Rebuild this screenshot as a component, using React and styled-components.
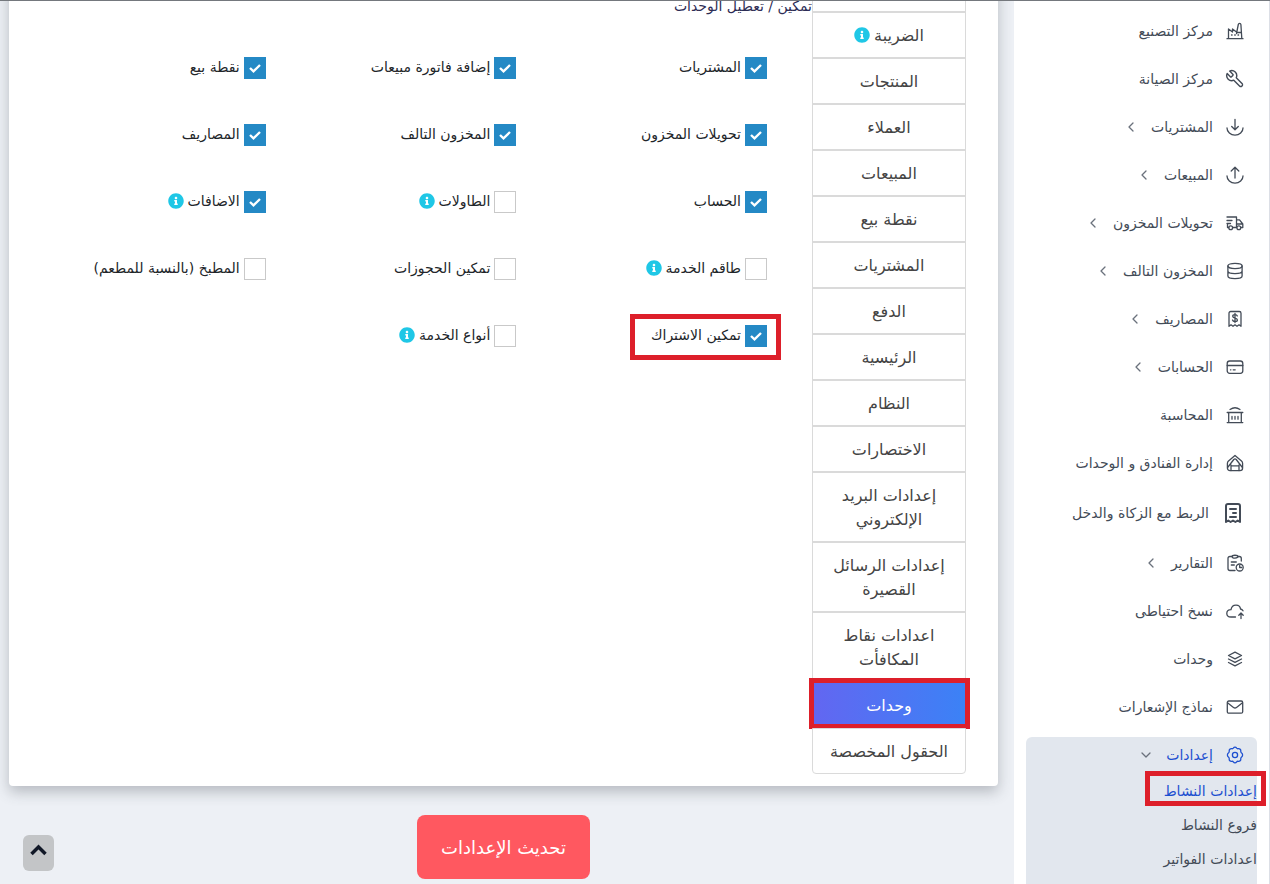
import React, { useState } from 'react';
import styled, { createGlobalStyle, css } from 'styled-components';
import { FaInfoCircle } from 'react-icons/fa';

const GlobalStyle = createGlobalStyle`
  * {
    box-sizing: border-box;
  }

  body {
    margin: 0;
    background-color: #edf0f5;
    font-family: 'DejaVu Sans', sans-serif;
    font-size: 14px;
  }
`;

const Page = styled.div`
  display: flex;
  height: 100vh;
  overflow: hidden;
  border-top: 1px solid #74787d;
`;

const Sidebar = styled.nav`
  flex: 0 0 256px;
  padding: 0 12px;
  background-color: white;
  border-right: 1px solid #dcdfe6;
`;

const MenuList = styled.ul`
  display: flex;
  flex-direction: column;
  gap: 12px;
  margin: 0;
  padding: 12px 0 0;
  list-style: none;
`;

const MenuItem = styled.li`
  border-radius: 6px;
  background-color: ${(props) => (props.$active ? '#e2e7ee' : 'transparent')};
  height: ${(props) => (props.$active ? '200px' : 'auto')};
`;

const MenuLink = styled.a`
  display: flex;
  align-items: center;
  gap: 12px;
  height: ${(props) => (props.$large ? '40px' : '36px')};
  padding: 0 12px;
  color: ${(props) => (props.$active ? '#1d4fd0' : '#434b57')};
  font-size: 14px;
  white-space: nowrap;
  text-decoration: none;
`;

const Icon = styled.svg`
  flex: none;
  fill: none;
  stroke: currentColor;
  stroke-width: ${(props) => props.$stroke || 1.3};
  stroke-linecap: round;
  stroke-linejoin: round;
`;

const Arrow = styled(Icon)`
  color: #6a717c;
`;

const SubMenu = styled.ul`
  margin: 0;
  padding: 1px 0 0;
  list-style: none;
`;

const SubLink = styled.a`
  position: relative;
  display: block;
  height: 34px;
  line-height: 34px;
  color: ${(props) => (props.$active ? '#1d4fd0' : '#434b57')};
  font-size: 14px;
  text-decoration: none;
`;

const Marker = styled.span`
  position: absolute;
  inset: ${(props) => props.$inset};
  border: 5px solid #dd1f2a;
  pointer-events: none;
`;

const Main = styled.main`
  position: relative;
  flex: 1;
  min-width: 0;
  display: flex;
  flex-direction: column;
  align-items: stretch;
`;

const Card = styled.section`
  display: flex;
  align-items: flex-start;
  gap: 30px;
  margin: -35px 16px 0 9px;
  padding: 0 32px 12px 21px;
  background-color: white;
  border-radius: 4px;
  box-shadow: 0 6px 14px rgba(60, 66, 75, 0.3);
`;

const Tabs = styled.div`
  flex: 0 0 154px;
  display: flex;
  flex-direction: column;
`;

const Tab = styled.button`
  position: relative;
  min-height: 46px;
  padding: 11px 15px 9px;
  border: 1px solid #dadada;
  background: white;
  color: #444;
  font-family: inherit;
  font-size: 16px;
  line-height: 24px;
  text-align: center;
  cursor: pointer;

  &:last-child {
    border-radius: 0 0 4px 4px;
  }

  ${(props) =>
    props.$active &&
    css`
      border-color: transparent;
      background: linear-gradient(to right, #6366f1, #3b82f6) border-box;
      color: white;
    `}
`;

const Info = styled(FaInfoCircle)`
  flex: none;
  width: 16px;
  height: 16px;
  color: #1fc7e6;
  vertical-align: -2px;

  ${Tab} & {
    margin-right: 4px;
  }
`;

const Pane = styled.div`
  flex: 1;
  min-width: 0;
`;

const Heading = styled.h4`
  margin: 28px -30px 0 0;
  height: 24px;
  color: #2d2d55;
  font-size: 14px;
  font-weight: 400;
  line-height: 24px;
`;

const Modules = styled.div`
  display: grid;
  grid-template-columns: repeat(3, 1fr);
  grid-auto-rows: 67px;
  padding-top: 39px;
`;

const ModuleLabel = styled.label`
  position: relative;
  display: flex;
  align-items: center;
  align-self: start;
  justify-self: start;
  gap: 4px;
  height: 22px;
  margin-right: 15px;
  color: #212529;
  font-size: 14px;
  white-space: nowrap;
`;

const ModuleText = styled.span`
  display: flex;
  align-items: center;
  gap: 4px;
  padding-bottom: 2px;
`;

const CheckWrap = styled.span`
  display: grid;
  place-items: center;
  width: 22px;
  height: 22px;

  > * {
    grid-area: 1 / 1;
  }
`;

const Check = styled.input`
  appearance: none;
  width: 22px;
  height: 22px;
  margin: 0;
  border: 1px solid #c9c9c9;
  background-color: white;
  cursor: pointer;

  &:checked {
    border-color: #2489c5;
    background-color: #2489c5;
  }
`;

const Tick = styled.svg`
  fill: none;
  stroke: white;
  stroke-width: 2.4;
  pointer-events: none;
`;

const SaveButton = styled.button`
  align-self: center;
  height: 64px;
  margin: 29px 7px 0 0;
  padding: 0 24px;
  border: none;
  border-radius: 8px;
  background-color: #ff5860;
  color: white;
  font-family: inherit;
  font-size: 18px;
  cursor: pointer;
`;

const ScrollTop = styled.button`
  position: absolute;
  left: 23px;
  bottom: 13px;
  display: grid;
  place-items: center;
  width: 31px;
  height: 36px;
  padding: 0 0 6px;
  border: none;
  border-radius: 6px;
  background-color: #c3c5c7;
  color: #111827;
  cursor: pointer;
`;

const icons = {
  factory: (
    <>
      <path d="M2 17.7h16M3.5 17.5V8L7.500 11V8l4 3M11.500 12.500 13.300 3.500c.3-1.500 2.400-1.500 2.600 0l.9 14" />
      <path d="M11.700 11.500h4.700M6.500 14h.6M9.7 14h.6M13 14h.6" />
    </>
  ),
  wrench: (
    <path
      transform="matrix(-.83 0 0 .83 20 0)"
      strokeWidth="1.700"
      d="M14.7 6.3a1 1 0 0 0 0 1.4l1.6 1.6a1 1 0 0 0 1.4 0l3.77-3.77a6 6 0 0 1-7.94 7.94l-6.91 6.91a2.12 2.12 0 0 1-3-3l6.91-6.91a6 6 0 0 1 7.94-7.94l-3.76 3.76z"
    />
  ),
  download: <path d="M2 11a8 7.2 0 0 0 16 0M10 2.3v10.4M6.7 9.5l3.3 3.3 3.3-3.3" />,
  upload: <path d="M2 11a8 7.2 0 0 0 16 0M10 13V2.5M6.2 6 10 2.3 13.8 6" />,
  truck: (
    <>
      <path d="M2 4h9.5v10.5H7.8M2 7.5h5M2 10.5h3.5M2.5 10.5v4h1.2M11.5 6.8h3L17.8 11v3.5h-2M12 11h5.5" />
      <circle cx="5.7" cy="14.8" r="1.9" />
      <circle cx="13.8" cy="14.8" r="1.9" />
    </>
  ),
  database: (
    <>
      <ellipse cx="10" cy="5" rx="7.1" ry="2.6" />
      <path d="M2.9 5v10c0 3.5 14.2 3.5 14.2 0V5M2.9 10c0 3.5 14.2 3.5 14.2 0" />
    </>
  ),
  expense: (
    <>
      <path d="M4 17.3V4.2C4 3 4.7 2.5 5.7 2.5h8.6c1 0 1.7.5 1.7 1.7v13.1l-2-1.5-2 1.5-2-1.5-2 1.5-2-1.5z" />
      <path d="M12.3 7c-.3-1-1.2-1.3-2.3-1.3-1.4 0-2.3.6-2.3 1.6 0 2.4 4.7 1 4.7 3.6 0 1-1 1.6-2.4 1.6-1.3 0-2.2-.5-2.5-1.5M10 4.500v9" />
    </>
  ),
  card: (
    <>
      <rect x="2.2" y="4" width="15.6" height="12.3" rx="2.5" />
      <path d="M2.2 8.5h15.6M5.5 12.8h.4M8.2 12.8h2" />
    </>
  ),
  bank: <path d="M5 4.500Q10 1 15 4.500M2.200 7.500h15.600M3.700 7.500v10M16.300 7.500v10M2.200 17.600h15.600M7 11.500v2.700M10 11.500v2.700M13 11.500v2.700" />,
  hotel: (
    <>
      <path d="M10 2.4 16.500 8c.7.6 1.100 1.500 1.100 2.400V15c0 1.600-1 2.600-2.600 2.600H5c-1.600 0-2.600-1-2.600-2.600v-4.600c0-.9.4-1.800 1.100-2.400z" />
      <path d="m3 14 5.800-7.500q1.200-1.200 2.400 0L17 14M6 17.500v-5.700M14 17.500v-5.700M6.300 12.800h7.400" />
    </>
  ),
  zakat: (
    <>
      <path d="M5 21V5c0-1.300.7-2 2-2h10c1.300 0 2 .7 2 2v16l-2.300-1.500-2.300 1.500-2.400-1.500L9.600 21l-2.300-1.500z" />
      <path d="M9 8h6M12 12h3M9 16h6" />
    </>
  ),
  report: (
    <>
      <path d="M7 3.500H5C3.700 3.500 3 4.200 3 5.500v10C3 16.800 3.700 17.500 5 17.500h5M13 3.500h1.300c1.300 0 2 .7 2 2V8" />
      <path d="M7 3.600C7 1.800 13 1.800 13 3.600S7 5.800 7 3.600M6.300 9h5M6.300 12h3" />
      <circle cx="14.700" cy="14.500" r="3.500" />
      <path d="M14.700 12.500v2h2" />
    </>
  ),
  backup: <path d="M10.500 16H6c-5.600-.2-5.600-7 0-7.300C7 2.500 15 2.800 15.500 8c1.200.2 2 .8 2.500 1.800M16 17.500v-5.300M13.800 14.200l2.200-2.200 2.200 2.200" />,
  layers: <path d="m10 3.200 6.500 3.300L10 9.800 3.500 6.500zM3.500 10l6.500 3.300 6.500-3.300M3.500 13.500l6.500 3.300 6.500-3.300" />,
  mail: (
    <>
      <rect x="2.300" y="4" width="15.400" height="12.200" rx="1.500" />
      <path d="m2.800 6 5.700 4.400c1 .8 2 .8 3 0L17.200 6" />
    </>
  ),
  gear: (
    <>
      <path d="M8.300 3.200c1-1.400 2.400-1.400 3.400 0 .4.500.8.600 1.400.5 1.800-.2 2.900.8 2.700 2.600-.1.600.1 1 .6 1.400 1.600 1.200 1.600 3.400 0 4.600-.5.4-.7.8-.6 1.400.2 1.800-.9 2.800-2.700 2.600-.6-.1-1 0-1.400.5-1 1.400-2.400 1.400-3.400 0-.4-.5-.8-.6-1.400-.5-1.800.2-2.900-.8-2.700-2.600.1-.6-.1-1-.6-1.400-1.600-1.200-1.600-3.400 0-4.600.5-.4.7-.8.6-1.400C4 4.500 5.100 3.500 6.900 3.700c.6.1 1 0 1.400-.5z" />
      <circle cx="10" cy="10" r="2.600" />
    </>
  ),
};

const menu = [
  { icon: 'factory', label: 'مركز التصنيع' },
  { icon: 'wrench', label: 'مركز الصيانة' },
  { icon: 'download', label: 'المشتريات', arrow: true },
  { icon: 'upload', label: 'المبيعات', arrow: true },
  { icon: 'truck', label: 'تحويلات المخزون', arrow: true },
  { icon: 'database', label: 'المخزون التالف', arrow: true },
  { icon: 'expense', label: 'المصاريف', arrow: true },
  { icon: 'card', label: 'الحسابات', arrow: true },
  { icon: 'bank', label: 'المحاسبة' },
  { icon: 'hotel', label: 'إدارة الفنادق و الوحدات' },
  { icon: 'zakat', label: 'الربط مع الزكاة والدخل', large: true },
  { icon: 'report', label: 'التقارير', arrow: true },
  { icon: 'backup', label: 'نسخ احتياطى' },
  { icon: 'layers', label: 'وحدات' },
  { icon: 'mail', label: 'نماذج الإشعارات' },
  {
    icon: 'gear',
    label: 'إعدادات',
    arrow: true,
    children: ['إعدادات النشاط', 'فروع النشاط', 'اعدادات الفواتير'],
  },
];

const tabs = [
  { label: '' },
  { label: 'الضريبة', info: true },
  { label: 'المنتجات' },
  { label: 'العملاء' },
  { label: 'المبيعات' },
  { label: 'نقطة بيع' },
  { label: 'المشتريات' },
  { label: 'الدفع' },
  { label: 'الرئيسية' },
  { label: 'النظام' },
  { label: 'الاختصارات' },
  { label: 'إعدادات البريد الإلكتروني' },
  { label: 'إعدادات الرسائل القصيرة' },
  { label: 'اعدادات نقاط المكافأت' },
  { label: 'وحدات', marked: true },
  { label: 'الحقول المخصصة' },
];

const modules = [
  { label: 'المشتريات', on: true },
  { label: 'إضافة فاتورة مبيعات', on: true },
  { label: 'نقطة بيع', on: true },
  { label: 'تحويلات المخزون', on: true },
  { label: 'المخزون التالف', on: true },
  { label: 'المصاريف', on: true },
  { label: 'الحساب', on: true },
  { label: 'الطاولات', info: true },
  { label: 'الاضافات', on: true, info: true },
  { label: 'طاقم الخدمة', info: true },
  { label: 'تمكين الحجوزات' },
  { label: 'المطبخ (بالنسبة للمطعم)' },
  { label: 'تمكين الاشتراك', on: true, marked: true },
  { label: 'أنواع الخدمة', info: true },
];

const SideMenuItem = ({ item }) => {
  const open = Boolean(item.children);
  const size = item.large ? 24 : 20;

  return (
    <MenuItem $active={open}>
      <MenuLink href="#" $active={open} $large={item.large}>
        <Icon width={size} height={size} viewBox={`0 0 ${size} ${size}`} $stroke={item.large ? 2 : 1.3}>
          {icons[item.icon]}
        </Icon>
        {item.label}
        {item.arrow && (
          <Arrow width="16" height="16" viewBox="0 0 16 16">
            <path d={open ? 'M4 6l4 4 4-4' : 'M10 4 6 8l4 4'} />
          </Arrow>
        )}
      </MenuLink>
      {open && (
        <SubMenu>
          {item.children.map((child, i) => (
            <li key={child}>
              <SubLink href="#" $active={i === 0}>
                {child}
                {i === 0 && <Marker $inset="-3px -9px 2px 119px" />}
              </SubLink>
            </li>
          ))}
        </SubMenu>
      )}
    </MenuItem>
  );
};

const Module = ({ item }) => {
  const [checked, setChecked] = useState(Boolean(item.on));

  return (
    <ModuleLabel>
      <CheckWrap>
        <Check type="checkbox" checked={checked} onChange={() => setChecked(!checked)} />
        {checked && (
          <Tick width="12" height="12" viewBox="0 0 12 12">
            <path d="M1 6l3.500 3.300L11 3" />
          </Tick>
        )}
      </CheckWrap>
      <ModuleText>
        {item.label}
        {item.info && <Info />}
      </ModuleText>
      {item.marked && <Marker $inset="-11px -14px -13px -21px" />}
    </ModuleLabel>
  );
};

const App = () => {
  const [activeTab, setActiveTab] = useState('وحدات');

  return (
    <>
      <GlobalStyle />
      <Page dir="rtl">
        <Sidebar>
          <MenuList>
            {menu.map((item) => (
              <SideMenuItem key={item.label} item={item} />
            ))}
          </MenuList>
        </Sidebar>

        <Main>
          <Card>
            <Tabs>
              {tabs.map((tab) => (
                <Tab
                  key={tab.label}
                  type="button"
                  $active={tab.label === activeTab}
                  onClick={() => setActiveTab(tab.label)}
                >
                  {tab.label}
                  {tab.info && <Info />}
                  {tab.marked && <Marker $inset="-5px -5px -2px -4px" />}
                </Tab>
              ))}
            </Tabs>
            <Pane>
              <Heading>تمكين / تعطيل الوحدات</Heading>
              <Modules>
                {modules.map((item) => (
                  <Module key={item.label} item={item} />
                ))}
              </Modules>
            </Pane>
          </Card>

          <SaveButton type="button">تحديث الإعدادات</SaveButton>
          <ScrollTop type="button" aria-label="أعلى الصفحة">
            <svg width="17" height="12" viewBox="0 0 17 12" fill="none" stroke="currentColor" strokeWidth="3.5">
              <path d="M1.5 10l7-7 7 7" />
            </svg>
          </ScrollTop>
        </Main>
      </Page>
    </>
  );
};

export default App;
